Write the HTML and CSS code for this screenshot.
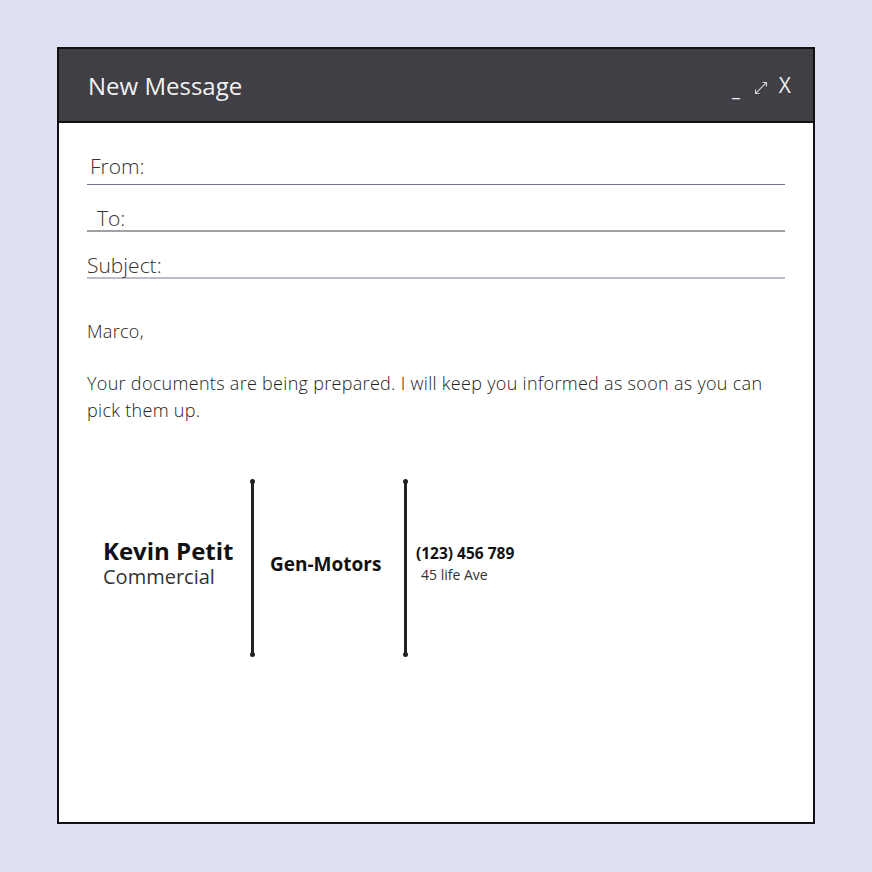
FILE: index.html
```html
<html>
  <head>
    <title>new message</title>
    <link rel="stylesheet" href="styles.css">
  </head>
  <body>
    <div id="window">
      <div id="header">
        <span class="title">New Message</span>
        <div class="controls">
          <span class="min">_</span>
          <svg class="expand" width="16" height="16" viewBox="0 0 16 16">
            <path d="M2.5 13.5 L13.5 2.5 M9.5 2.5 L13.5 2.5 L13.5 6.5 M2.5 9.5 L2.5 13.5 L6.5 13.5" fill="none" stroke="#d0d0d4" stroke-width="1.1"/>
          </svg>
          <span class="close">X</span>
        </div>
      </div>

      <div id="content">
        <div class="field from">From:</div>
        <div class="field to">To:</div>
        <div class="field subject">Subject:</div>

        <div class="message">
          <p>Marco,</p>
          <p>Your documents are being prepared. I will keep you informed as soon as you can pick them up.</p>
        </div>

        <div class="signature">
          <div class="who">
            <div class="name">Kevin Petit</div>
            <div class="job">Commercial</div>
          </div>
          <div class="bar"></div>
          <div class="company">Gen-Motors</div>
          <div class="bar"></div>
          <div class="contact">
            <div class="phone">(123) 456 789</div>
            <div class="address">45 life Ave</div>
          </div>
        </div>
      </div>
    </div>
  </body>
</html>
```

FILE: styles.css
```css
body {
  margin: 0;
  padding: 47px 57px;
  background-color: #e0e0f4;
  font-family: "Open Sans", sans-serif;
}
#window {
  width: 758px;
  height: 777px;
  box-sizing: border-box;
  border: 2px solid #111;
  background-color: #fff;
}
#header {
  height: 74px;
  box-sizing: border-box;
  border-bottom: 2px solid #111;
  background-color: #3f3f45;
  display: flex;
  align-items: center;
  justify-content: space-between;
  padding: 0 22px 0 29px;
}
#header .title {
  color: #f2f2f2;
  font-size: 24px;
}
.controls {
  display: flex;
  align-items: center;
  gap: 10px;
  color: #eee;
}
.controls .min {
  font-size: 18px;
  margin-top: 7px;
  margin-right: 3px;
}
.controls .expand {
  margin-top: 6px;
}
.controls .close {
  font-size: 21px;
}
#content {
  padding: 14px 28px 0 28px;
}
.field {
  height: 47px;
  box-sizing: border-box;
  display: flex;
  align-items: flex-end;
  padding-bottom: 4px;
  font-size: 21px;
  line-height: 27px;
  color: #333;
  font-weight: 300;
}
.from {
  height: 48px;
  border-bottom: 1px solid #74748c;
  padding-left: 3px;
}
.to {
  border-bottom: 2px solid #a0a0a6;
  padding-left: 10px;
  padding-bottom: 0;
  line-height: 24px;
}
.subject {
  border-bottom: 2px solid #bcbccb;
  padding-left: 0;
  padding-bottom: 0;
  line-height: 24px;
}
.message {
  margin-top: 39px;
  font-size: 18px;
  font-weight: 300;
  letter-spacing: 0.3px;
  line-height: 27px;
  color: #222;
}
.message p {
  margin: 0 0 25px 0;
}
.signature {
  margin-top: 56px;
  display: flex;
  align-items: center;
  color: #111;
}
.who {
  margin-left: 16px;
  width: 148px;
  margin-top: -12px;
}
.name {
  font-weight: 700;
  font-size: 24px;
  line-height: 30px;
}
.job {
  font-size: 20px;
  line-height: 22px;
  color: #333;
}
.bar {
  width: 3px;
  height: 176px;
  background-color: #222;
  position: relative;
}
.bar:before,
.bar:after {
  content: "";
  position: absolute;
  left: -1px;
  width: 5px;
  height: 5px;
  border-radius: 50%;
  background-color: #222;
}
.bar:before {
  top: -1px;
}
.bar:after {
  bottom: -1px;
}
.company {
  font-weight: 700;
  font-size: 19px;
  width: 134px;
  padding-left: 16px;
  margin-top: -8px;
}
.contact {
  padding-left: 9px;
  margin-top: -8px;
}
.phone {
  font-weight: 700;
  font-size: 15.5px;
  line-height: 21px;
}
.address {
  font-size: 14px;
  line-height: 22px;
  padding-left: 5px;
  color: #333;
}
```
